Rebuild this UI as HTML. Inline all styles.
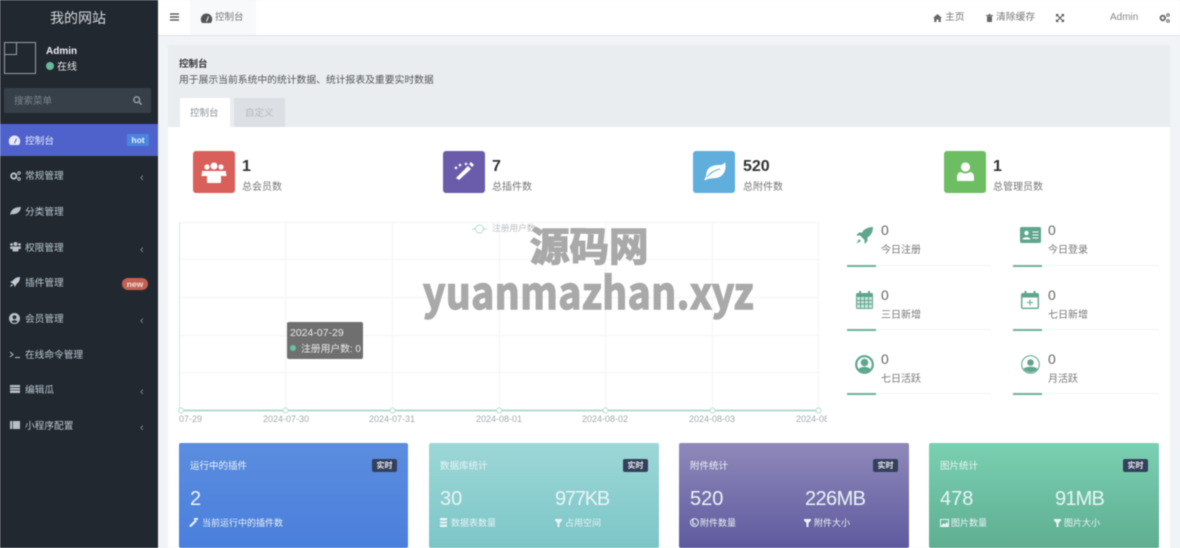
<!DOCTYPE html>
<html lang="zh"><head><meta charset="utf-8"><title>控制台</title>
<style>
*{box-sizing:border-box;margin:0;padding:0}
html,body{width:1180px;height:548px;overflow:hidden;background:#f1f4f7}
body{font-family:"Liberation Sans","Noto Sans CJK SC",sans-serif;font-size:10px;position:relative}
#w{position:absolute;left:0;top:0;width:1180px;height:548px;filter:blur(.45px)}
.a{position:absolute;white-space:nowrap;line-height:1}
svg{position:absolute;overflow:visible}
.side{position:absolute;left:0;top:0;width:158px;height:548px;background:#222830}
.m{color:#b8c7ce;font-size:9.700px}
.arr{color:#8a949c;font-size:11px;left:140px}
.v{font-size:16px;font-weight:bold;color:#333}
.l{font-size:10px;color:#777}
.box{position:absolute;width:42px;height:42px;top:151px;border-radius:3px}
.n{font-size:14px;color:#666}
.g{position:absolute;height:2px;width:29px;background:#6cb29c}
.t{position:absolute;height:1px;background:#f1f3f4}
.card{position:absolute;top:443px;height:105px;border-radius:2px;color:#fff}
.card .a{color:#e9f4f5}
.bdg{position:absolute;top:16px;right:11px;width:25px;height:13px;border-radius:2px;background:#33405c;color:#e8e8e8;font-size:8px;line-height:13px;text-align:center;font-weight:bold}
.xl{font-size:9px;color:#a3a9ad;top:415px}
.big{font-size:20px;top:46px}
.sm{font-size:9px;top:76px}
.wm{position:absolute;color:#a9a9a9;font-weight:bold;font-family:"Noto Sans CJK SC",sans-serif;white-space:nowrap;line-height:1;-webkit-text-stroke:1.500px #a9a9a9}
</style></head><body><div id="w">

<div class="side"></div>
<div class="a" style="left:50px;top:11px;font-size:14px;color:#d5d9dc">我的网站</div>
<div style="position:absolute;left:4px;top:42px;width:32px;height:32px;border:1px solid #9aa0a5"></div>
<div style="position:absolute;left:4px;top:42px;width:13px;height:13px;border:1px solid #9aa0a5"></div>
<div class="a" style="left:46px;top:47px;font-size:10px;font-weight:bold;color:#eef0f2">Admin</div>
<div style="position:absolute;left:46px;top:62px;width:8px;height:8px;border-radius:50%;background:#67b99b"></div>
<div class="a" style="left:57px;top:63px;font-size:10px;color:#e2e5e8">在线</div>
<div style="position:absolute;left:4px;top:88px;width:147px;height:25px;background:#374048;border-radius:2px"></div>
<div class="a" style="left:14px;top:97px;font-size:9.500px;color:#78838c">搜索菜单</div>
<svg style="left:133px;top:96px" width="9" height="9" viewBox="0 0 9 9"><circle cx="3.700" cy="3.700" r="2.900" fill="none" stroke="#9aa4ab" stroke-width="1.300"/><path d="M6 6l2.600 2.600" stroke="#9aa4ab" stroke-width="1.500"/></svg>

<div style="position:absolute;left:0;top:124px;width:158px;height:32px;background:#4f62cc"></div>
<svg style="left:9px;top:135px" width="11" height="10" viewBox="0 0 11 10"><path d="M1.200 10A5.700 5.700 0 1 1 9.800 10Z" fill="#e8eaf6"/><path d="M5.500 8.500L7.500 3.500" stroke="#4f62cc" stroke-width="1"/></svg>
<div class="a m" style="left:25px;top:137px;color:#e8ebf8">控制台</div>
<div class="a" style="left:127px;top:134px;width:22px;height:12px;line-height:12px;text-align:center;background:#4a86df;border-radius:2px;color:#e8f0fb;font-size:8.500px;font-weight:bold">hot</div>

<svg style="left:10px;top:171px" width="11" height="10" viewBox="0 0 11 10"><circle cx="3.800" cy="5" r="2.600" fill="none" stroke="#b8c0c6" stroke-width="2"/><circle cx="9" cy="2" r="1.300" fill="none" stroke="#b8c0c6"/><circle cx="9" cy="8" r="1.300" fill="none" stroke="#b8c0c6"/></svg>
<div class="a m" style="left:25px;top:172px">常规管理</div><div class="a arr" style="top:173px">‹</div>
<svg style="left:10px;top:207px" width="11" height="8" viewBox="0 0 11 8"><path d="M0 8C1 2 5 0 11 0C10.500 5 6 8 2 7Z" fill="#b8c0c6"/></svg>
<div class="a m" style="left:25px;top:208px">分类管理</div>
<svg style="left:10px;top:242px" width="11" height="10" viewBox="0 0 11 10"><circle cx="5.500" cy="2" r="2" fill="#b8c0c6"/><circle cx="1.500" cy="2.500" r="1.400" fill="#b8c0c6"/><circle cx="9.500" cy="2.500" r="1.400" fill="#b8c0c6"/><rect x="2.500" y="4.500" width="6" height="5" rx="1" fill="#b8c0c6"/><rect x="0" y="4.500" width="11" height="2.500" rx="1" fill="#b8c0c6"/></svg>
<div class="a m" style="left:25px;top:244px">权限管理</div><div class="a arr" style="top:245px">‹</div>
<svg style="left:10px;top:277px" width="10" height="10" viewBox="0 0 10 10"><path d="M10 0C6 0 4 2 3 3.500L0 5L2 6L4 8L5 10L6.500 7C8 6 10 4 10 0ZM1.500 7L0 10L3 8.500Z" fill="#c4cbd0"/></svg>
<div class="a m" style="left:25px;top:279px">插件管理</div>
<div class="a" style="left:122px;top:278px;width:26px;height:12px;line-height:12px;text-align:center;background:#c4604f;border-radius:6px;color:#f0e3e0;font-size:8.500px;font-weight:bold">new</div>
<svg style="left:9px;top:313px" width="11" height="11" viewBox="0 0 11 11"><circle cx="5.500" cy="5.500" r="5.500" fill="#b8c0c6"/><circle cx="5.500" cy="4.300" r="1.900" fill="#222830"/><path d="M2.500 8.500C3 6.800 8 6.800 8.500 8.500A4 4 0 0 1 2.500 8.500Z" fill="#222830"/></svg>
<div class="a m" style="left:25px;top:315px">会员管理</div><div class="a arr" style="top:316px">‹</div>
<svg style="left:10px;top:351px" width="10" height="7" viewBox="0 0 10 7"><path d="M0 1l3 2.500L0 6M5 6.500h5" fill="none" stroke="#b8c0c6"/></svg>
<div class="a m" style="left:25px;top:351px">在线命令管理</div>
<svg style="left:10px;top:385px" width="10" height="8" viewBox="0 0 10 8"><path d="M0 0h10v8H0z" fill="#b8c0c6"/><path d="M0 2.500h10M0 5.200h10" stroke="#222830" stroke-width=".7"/></svg>
<div class="a m" style="left:25px;top:386px">编辑瓜</div><div class="a arr" style="top:387px">‹</div>
<svg style="left:10px;top:421px" width="10" height="8" viewBox="0 0 10 8"><path d="M0 0h10v8H0z" fill="#b8c0c6"/><path d="M2.500 0v8" stroke="#222830" stroke-width=".7"/></svg>
<div class="a m" style="left:25px;top:422px">小程序配置</div><div class="a arr" style="top:423px">‹</div>

<div style="position:absolute;left:158px;top:0;width:1022px;height:36px;background:#fff;border-bottom:1px solid #dfe2e4"></div>
<svg style="left:170px;top:13px" width="9" height="8" viewBox="0 0 9 8"><path d="M0 1h9M0 4h9M0 7h9" stroke="#444" stroke-width="1.200"/></svg>
<div style="position:absolute;left:190px;top:0;width:66px;height:35px;background:#f8f9fa"></div>
<svg style="left:201px;top:13px" width="11" height="10" viewBox="0 0 11 10"><path d="M1.200 10A5.700 5.700 0 1 1 9.800 10Z" fill="#555"/><path d="M5.500 8.500L7.500 3.500" stroke="#fff" stroke-width="1"/></svg>
<div class="a" style="left:215px;top:13px;font-size:9.500px;color:#777">控制台</div>
<svg style="left:933px;top:14px" width="9" height="8" viewBox="0 0 9 8"><path d="M4.500 0L9 4H7.800V8H5.500V5.500H3.500V8H1.200V4H0Z" fill="#666"/></svg>
<div class="a" style="left:945px;top:13px;font-size:9.800px;color:#777">主页</div>
<svg style="left:986px;top:14px" width="7" height="8" viewBox="0 0 7 8"><path d="M0 1h7v1H0zM1 2.300h5V8H1zM2.500 0h2v1h-2z" fill="#666"/></svg>
<div class="a" style="left:996px;top:13px;font-size:9.800px;color:#777">清除缓存</div>
<svg style="left:1056px;top:14px" width="8" height="8" viewBox="0 0 8 8"><path d="M0 0h3L0 3zM8 0v3L5 0zM0 8V5l3 3zM8 8H5l3-3z" fill="#555"/><path d="M1 1l6 6M7 1L1 7" stroke="#555"/></svg>
<div class="a" style="left:1110px;top:13px;font-size:10px;color:#888">Admin</div>
<svg style="left:1159px;top:13px" width="11" height="10" viewBox="0 0 11 10"><circle cx="3.800" cy="5" r="2.300" fill="none" stroke="#666" stroke-width="1.800"/><circle cx="9" cy="2" r="1.300" fill="none" stroke="#666"/><circle cx="9" cy="8" r="1.300" fill="none" stroke="#666"/></svg>

<div style="position:absolute;left:168px;top:45px;width:1002px;height:82px;background:#e9edf0"></div>
<div style="position:absolute;left:168px;top:127px;width:1002px;height:421px;background:#fff"></div>
<div class="a" style="left:179px;top:60px;font-size:9.500px;color:#333;font-weight:bold">控制台</div>
<div class="a" style="left:179px;top:76px;font-size:9.800px;color:#555">用于展示当前系统中的统计数据、统计报表及重要实时数据</div>
<div style="position:absolute;left:180px;top:98px;width:50px;height:29px;background:#fff"></div>
<div class="a" style="left:190px;top:109px;font-size:9.500px;color:#8b9196">控制台</div>
<div style="position:absolute;left:234px;top:98px;width:51px;height:29px;background:#dcdfe3"></div>
<div class="a" style="left:245px;top:109px;font-size:9.500px;color:#b4b9bd">自定义</div>

<div class="box" style="left:193px;background:#d9605a"></div>
<svg style="left:202px;top:161px" width="24" height="22" viewBox="0 0 24 22"><g fill="#fff"><circle cx="12" cy="5" r="3.500"/><circle cx="5" cy="6" r="2.600"/><circle cx="19" cy="6" r="2.600"/><path d="M0 10h24v3a1 1 0 0 1-1 2H1a1 1 0 0 1-1-2z"/><path d="M5 10h14v11a1 1 0 0 1-1 1H6a1 1 0 0 1-1-1z"/></g></svg>
<div class="a v" style="left:242px;top:159px">1</div><div class="a l" style="left:242px;top:183px">总会员数</div>
<div class="box" style="left:443px;background:#6b5cab"></div>
<svg style="left:454px;top:161px" width="21" height="21" viewBox="0 0 21 21"><path d="M2 19L14 7l3 3L5 21z" fill="#fff" transform="translate(0 -2)"/><path d="M6 2l.7 1.500L8 4l-1.300.7L6 6l-.7-1.300L4 4l1.300-.5zM12 1l.6 1.200L14 3l-1.400.6L12 5l-.6-1.400L10 3l1.400-.8zM2 5l.6 1L4 7l-1.400.5L2 9l-.6-1.500L0 7l1.400-1zM17 1l3 3-2 2-3-3z" fill="#fff"/></svg>
<div class="a v" style="left:492px;top:159px">7</div><div class="a l" style="left:492px;top:183px">总插件数</div>
<div class="box" style="left:693px;background:#60aedc"></div>
<svg style="left:703px;top:162px" width="23" height="19" viewBox="0 0 23 19"><path d="M1 18C3 15 3 14 3.500 11C4.500 4 12 3 16 3C19 3 21 2 22 0C24 7 21 15 13 16C9 16.500 6 16 3 18Z" fill="#fff"/><path d="M4 15C8 10 12 8 17 7" stroke="#60aedc" fill="none"/></svg>
<div class="a v" style="left:743px;top:159px">520</div><div class="a l" style="left:743px;top:183px">总附件数</div>
<div class="box" style="left:944px;background:#6dbd63"></div>
<svg style="left:957px;top:162px" width="17" height="20" viewBox="0 0 17 20"><circle cx="8.500" cy="5" r="4.600" fill="#fff"/><path d="M1 19a1 1 0 0 1-1-1v-3c0-3 2-5 4-5 3 2 6 2 9 0 2 0 4 2 4 5v3a1 1 0 0 1-1 1z" fill="#fff"/></svg>
<div class="a v" style="left:993px;top:159px">1</div><div class="a l" style="left:993px;top:183px">总管理员数</div>

<svg style="left:0;top:0" width="1180" height="548">
<g stroke="#f3f4f5" stroke-width="1" fill="none">
<path d="M179.500 222.500H819M179.500 259.500H819M179.500 297.500H819M179.500 335.500H819M179.500 372.500H819"/>
<path d="M285.500 222V410M392.500 222V410M499.500 222V410M605.500 222V410M712.500 222V410M818.500 222V410"/>
</g>
<path d="M179.500 222V410" stroke="#dfe4e6" fill="none"/>
<path d="M179 410.500H819" stroke="#b5dbd0" stroke-width="2" fill="none"/>
<g fill="#fff" stroke="#b5dbd0"><circle cx="181" cy="410.500" r="2.500"/><circle cx="285.500" cy="410.500" r="2.500"/><circle cx="392.500" cy="410.500" r="2.500"/><circle cx="499" cy="410.500" r="2.500"/><circle cx="605.500" cy="410.500" r="2.500"/><circle cx="712.500" cy="410.500" r="2.500"/><circle cx="818.500" cy="410.500" r="2.500"/></g>
<path d="M472 229h15" stroke="#b5dbd0" fill="none"/><circle cx="479.500" cy="229" r="4" fill="#fff" stroke="#b5dbd0"/>
</svg>
<div class="a" style="left:492px;top:224px;font-size:8.700px;color:#b8bcbf">注册用户数</div>
<div class="a xl" style="left:179px">07-29</div>
<div class="a xl" style="left:263px">2024-07-30</div>
<div class="a xl" style="left:369px">2024-07-31</div>
<div class="a xl" style="left:476px">2024-08-01</div>
<div class="a xl" style="left:582px">2024-08-02</div>
<div class="a xl" style="left:689px">2024-08-03</div>
<div style="position:absolute;left:796px;top:410px;width:31px;height:15px;overflow:hidden"><div class="a" style="left:0;top:5px;font-size:9px;color:#a3a9ad">2024-08-04</div></div>

<div style="position:absolute;left:287px;top:322px;width:76px;height:37px;background:#6f6f6f;border-radius:2px"></div>
<div class="a" style="left:290px;top:328px;font-size:10.500px;color:#e9e9e9">2024-07-29</div>
<div style="position:absolute;left:290px;top:345px;width:6px;height:6px;border-radius:50%;background:#67c2a3"></div>
<div class="a" style="left:301px;top:345px;font-size:9.800px;color:#e9e9e9">注册用户数: 0</div>

<svg style="left:856px;top:227px" width="17" height="17" viewBox="0 0 17 17"><path d="M17 0C12 0 8 2 6 5.500H3L0 8.500H4L8.500 13V17L11.500 14V10.500C15 8.500 17 5 17 0ZM3 12L0.500 16.500L5 14Z" fill="#5fa68f"/></svg>
<div class="a n" style="left:881px;top:223px">0</div><div class="a l" style="left:881px;top:246px">今日注册</div>
<div class="g" style="left:847px;top:265px"></div><div class="t" style="left:876px;top:265px;width:115px"></div>
<svg style="left:1020px;top:227px" width="21" height="16" viewBox="0 0 21 16"><rect width="21" height="16" rx="1.500" fill="#5fa68f"/><circle cx="6.500" cy="6" r="2.200" fill="#fff"/><path d="M2.500 12.500c0-3 8-3 8 0z" fill="#fff"/><path d="M12.500 5h6M12.500 8h6M12.500 11h6" stroke="#fff"/></svg>
<div class="a n" style="left:1048px;top:223px">0</div><div class="a l" style="left:1048px;top:246px">今日登录</div>
<div class="g" style="left:1013px;top:265px"></div><div class="t" style="left:1042px;top:265px;width:117px"></div>

<svg style="left:856px;top:291px" width="17" height="18" viewBox="0 0 17 18"><rect y="2" width="17" height="16" rx="1.500" fill="#5fa68f"/><path d="M1 6h15v11H1z" fill="#cfe5dd"/><path d="M1 9.500h15M1 13h15M4.500 6v11M8.500 6v11M12.500 6v11" stroke="#5fa68f"/><rect x="3" width="2" height="4" fill="#5fa68f"/><rect x="12" width="2" height="4" fill="#5fa68f"/></svg>
<div class="a n" style="left:881px;top:288px">0</div><div class="a l" style="left:881px;top:311px">三日新增</div>
<div class="g" style="left:847px;top:329px"></div><div class="t" style="left:876px;top:329px;width:115px"></div>
<svg style="left:1021px;top:291px" width="18" height="18" viewBox="0 0 18 18"><rect x=".7" y="2.700" width="16.600" height="14.600" rx="1" fill="#fff" stroke="#5fa68f" stroke-width="1.400"/><path d="M1 3h16v3.500H1z" fill="#5fa68f"/><path d="M9 8.500v6M6 11.500h6" stroke="#5fa68f"/><rect x="3.500" width="2" height="4" fill="#5fa68f"/><rect x="12.500" width="2" height="4" fill="#5fa68f"/></svg>
<div class="a n" style="left:1048px;top:288px">0</div><div class="a l" style="left:1048px;top:311px">七日新增</div>
<div class="g" style="left:1013px;top:329px"></div><div class="t" style="left:1042px;top:329px;width:117px"></div>

<svg style="left:855px;top:355px" width="19" height="19" viewBox="0 0 19 19"><circle cx="9.500" cy="9.500" r="8.300" fill="#fff" stroke="#5fa68f" stroke-width="2.200"/><circle cx="9.500" cy="7.500" r="3.800" fill="#5fa68f"/><path d="M3.500 14.500C5 11 14 11 15.500 14.500C13 17.500 6 17.500 3.500 14.500Z" fill="#5fa68f"/></svg>
<div class="a n" style="left:881px;top:352px">0</div><div class="a l" style="left:881px;top:375px">七日活跃</div>
<div class="g" style="left:847px;top:393px"></div><div class="t" style="left:876px;top:393px;width:115px"></div>
<svg style="left:1021px;top:355px" width="19" height="19" viewBox="0 0 19 19"><circle cx="9.500" cy="9.500" r="8.800" fill="#fff" stroke="#5fa68f" stroke-width="1"/><circle cx="9.500" cy="7.500" r="3.300" fill="#5fa68f"/><path d="M2.500 14C4 11 15 11 16.500 14C13 18.500 6 18.500 2.500 14Z" fill="#5fa68f"/></svg>
<div class="a n" style="left:1048px;top:352px">0</div><div class="a l" style="left:1048px;top:375px">月活跃</div>
<div class="g" style="left:1013px;top:393px"></div><div class="t" style="left:1042px;top:393px;width:117px"></div>

<div class="card" style="left:179px;width:229px;background:linear-gradient(#5b8ddf,#4a7fdc)">
<div class="a" style="left:11px;top:19px;font-size:9.500px">运行中的插件</div><div class="bdg">实时</div>
<div class="a big" style="left:11px">2</div>
<svg style="left:10px;top:75px" width="9" height="9" viewBox="0 0 9 9"><path d="M0 8L6 2l2 1-6 6zM5 0h4v2H5z" fill="#e9f4f5"/></svg>
<div class="a sm" style="left:23px">当前运行中的插件数</div></div>

<div class="card" style="left:429px;width:230px;background:linear-gradient(#9dd7d7,#7cc6c8)">
<div class="a" style="left:11px;top:19px;font-size:9.500px">数据库统计</div><div class="bdg">实时</div>
<div class="a big" style="left:11px">30</div><div class="a big" style="left:126px;letter-spacing:-1.200px">977KB</div>
<svg style="left:11px;top:75px" width="7" height="9" viewBox="0 0 7 9"><path d="M0 0h7v9H0z" fill="#e9f4f5"/><path d="M0 3h7M0 6h7" stroke="#7cc6c8"/></svg>
<div class="a sm" style="left:22px">数据表数量</div>
<svg style="left:126px;top:76px" width="7" height="8" viewBox="0 0 7 8"><path d="M0 0h7v1.500L4.500 4v4h-2V4L0 1.500z" fill="#e9f4f5"/></svg>
<div class="a sm" style="left:136px">占用空间</div></div>

<div class="card" style="left:679px;width:230px;background:linear-gradient(#8f89ba,#5f5a9f)">
<div class="a" style="left:11px;top:19px;font-size:9.500px">附件统计</div><div class="bdg">实时</div>
<div class="a big" style="left:11px">520</div><div class="a big" style="left:126px;letter-spacing:-.6px">226MB</div>
<svg style="left:11px;top:75px" width="9" height="9" viewBox="0 0 9 9"><circle cx="4.500" cy="4.500" r="3.900" fill="none" stroke="#e9f4f5"/><path d="M3 1v5h3" fill="none" stroke="#e9f4f5"/></svg>
<div class="a sm" style="left:21px">附件数量</div>
<svg style="left:125px;top:76px" width="7" height="8" viewBox="0 0 7 8"><path d="M0 0h7v1.500L4.500 4v4h-2V4L0 1.500z" fill="#e9f4f5"/></svg>
<div class="a sm" style="left:135px">附件大小</div></div>

<div class="card" style="left:929px;width:230px;background:linear-gradient(#7ad0b2,#5fae92)">
<div class="a" style="left:11px;top:19px;font-size:9.500px">图片统计</div><div class="bdg">实时</div>
<div class="a big" style="left:11px">478</div><div class="a big" style="left:126px;letter-spacing:-.8px">91MB</div>
<svg style="left:11px;top:76px" width="9" height="8" viewBox="0 0 9 8"><rect x=".5" y=".5" width="8" height="7" fill="none" stroke="#e9f4f5"/><path d="M1 7l2.500-3 1.500 1.500L6.500 3 8 5v2z" fill="#e9f4f5"/></svg>
<div class="a sm" style="left:22px">图片数量</div>
<svg style="left:125px;top:76px" width="7" height="8" viewBox="0 0 7 8"><path d="M0 0h7v1.500L4.500 4v4h-2V4L0 1.500z" fill="#e9f4f5"/></svg>
<div class="a sm" style="left:135px">图片大小</div></div>

<div class="wm" style="left:530px;top:225px;font-size:39.500px">源码网</div>
<div class="wm" style="left:423px;top:268px;font-size:44px;letter-spacing:.6px;transform:scaleX(.885);transform-origin:0 0">yuanmazhan.xyz</div>
</div></body></html>
